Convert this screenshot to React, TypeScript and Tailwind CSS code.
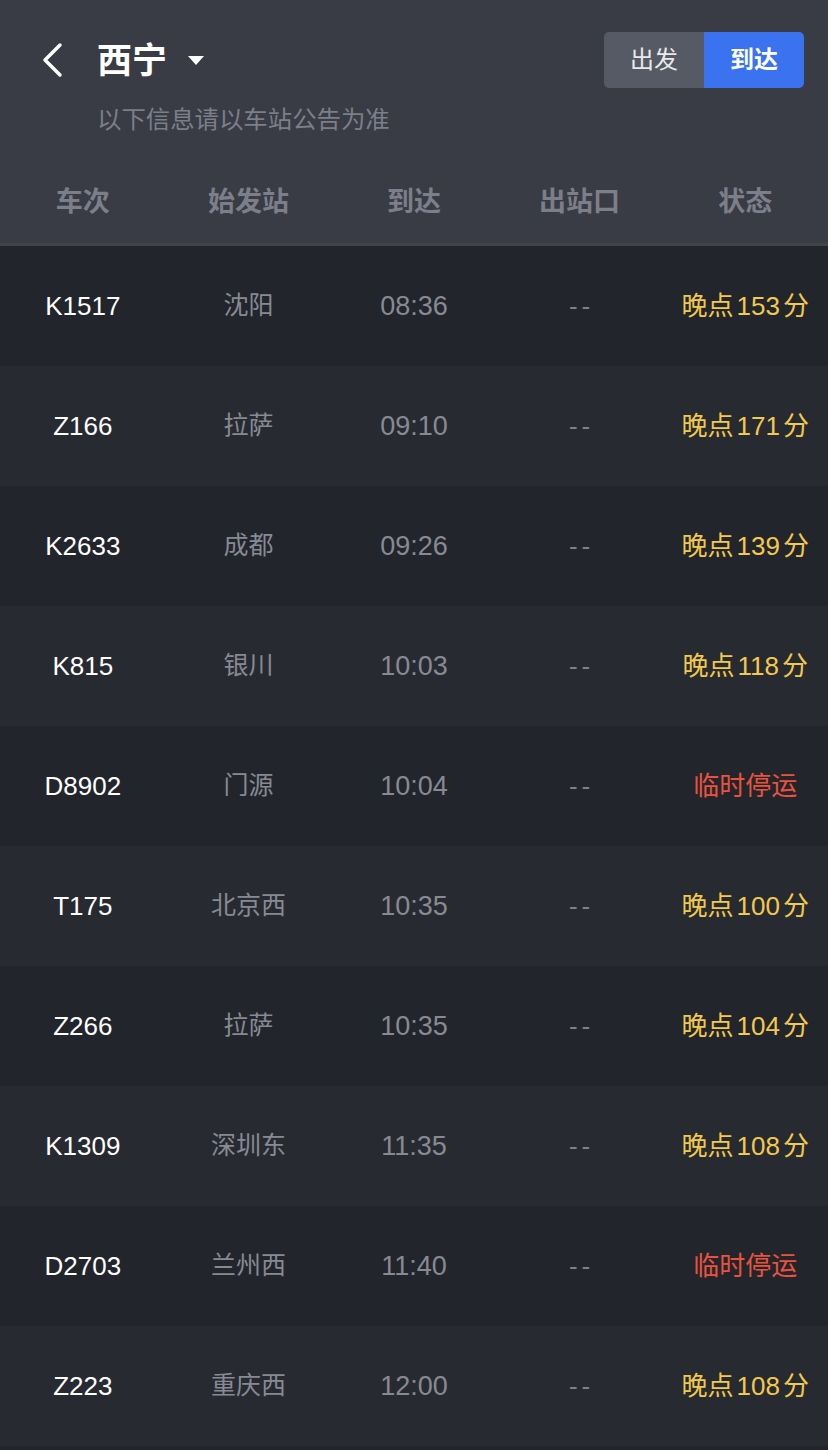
const trains = [
  { no: "K1517", from: "沈阳", time: "08:36", late: "153" },
  { no: "Z166", from: "拉萨", time: "09:10", late: "171" },
  { no: "K2633", from: "成都", time: "09:26", late: "139" },
  { no: "K815", from: "银川", time: "10:03", late: "118" },
  { no: "D8902", from: "门源", time: "10:04", late: "" },
  { no: "T175", from: "北京西", time: "10:35", late: "100" },
  { no: "Z266", from: "拉萨", time: "10:35", late: "104" },
  { no: "K1309", from: "深圳东", time: "11:35", late: "108" },
  { no: "D2703", from: "兰州西", time: "11:40", late: "" },
  { no: "Z223", from: "重庆西", time: "12:00", late: "108" },
]

const font = { fontFamily: '"Liberation Sans", "Noto Sans CJK SC", sans-serif' }

const App = () => {
  return (
    <div className="w-[828px] h-[1450px] bg-[#22252c] overflow-hidden" style={font}>
      {/* Header */}
      <header className="h-[246px] bg-[#393c45] flex flex-col border-b-[3px] border-[#41444d]">
        <div className="flex items-center justify-between pt-[32px] pr-[24px]">
          <div className="flex items-center h-[56px]">
            <svg width="24" height="36" viewBox="0 0 24 36" className="ml-[40px]">
              <path d="M20 3 L5 18 L20 33" fill="none" stroke="#ffffff" strokeWidth="3.5" strokeLinecap="round" strokeLinejoin="round" />
            </svg>
            <h1 className="ml-[33px] text-[35px] font-bold text-white leading-none">西宁</h1>
            <svg width="16" height="9" viewBox="0 0 16 9" className="ml-[21px]">
              <path d="M0 0 H16 L8 9 Z" fill="#ffffff" />
            </svg>
          </div>
          <div className="flex h-[56px] rounded-[5px] overflow-hidden text-[24px]">
            <div className="w-[100px] bg-[#565a65] text-[#e8e9ec] flex items-center justify-center">出发</div>
            <div className="w-[100px] bg-[#3a72f0] text-white font-bold flex items-center justify-center">到达</div>
          </div>
        </div>
        <p className="ml-[97px] mt-[16px] text-[24.4px] leading-[32px] text-[#7b7f8a]">以下信息请以车站公告为准</p>
        <div className="grid grid-cols-5 mt-[42px] h-[48px] items-center text-center text-[27px] font-bold text-[#7c7f8a]">
          <span>车次</span>
          <span>始发站</span>
          <span>到达</span>
          <span>出站口</span>
          <span>状态</span>
        </div>
      </header>

      {/* Rows */}
      {trains.map((t, i) => (
        <div
          key={i}
          className={`grid grid-cols-5 h-[120px] items-center text-center ${i % 2 === 0 ? "bg-[#22252c]" : "bg-[#282a31]"}`}
        >
          <span className="text-[26px] text-white">{t.no}</span>
          <span className="text-[25px] text-[#878a93]">{t.from}</span>
          <span className="text-[27px] text-[#878a93]">{t.time}</span>
          <span className="text-[26px] text-[#7d808a] tracking-[4px] pl-[4px]">--</span>
          {t.late ? (
            <span className="text-[26px] text-[#f1c94c]">
              晚点<span className="mx-[3px]">{t.late}</span>分
            </span>
          ) : (
            <span className="text-[26px] text-[#e9533d]">临时停运</span>
          )}
        </div>
      ))}
    </div>
  )
}

export default App
